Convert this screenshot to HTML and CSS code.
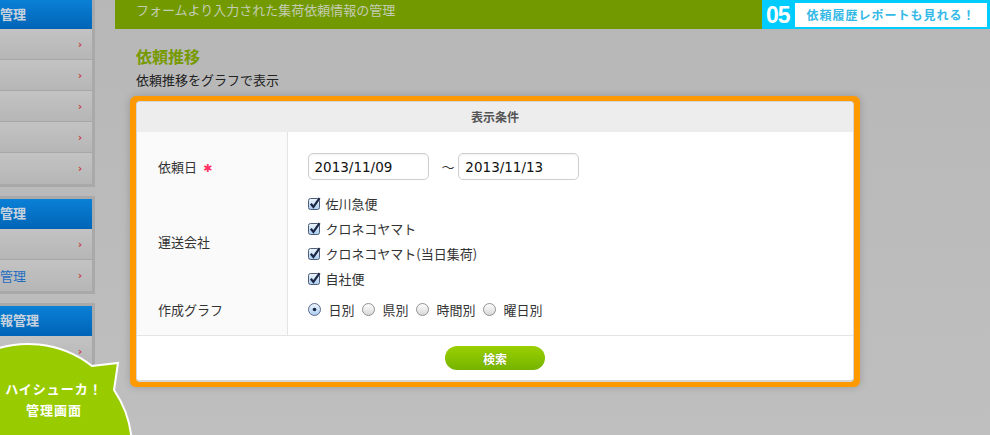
FILE: index.html
```html
<!DOCTYPE html>
<html lang="ja">
<head>
    <meta charset="UTF-8">
    <title>依頼推移 - ハイシューカ！管理画面</title>
    <link rel="stylesheet" href="styles.css">
</head>
<body>
    <svg class="svg-defs" width="0" height="0" aria-hidden="true">
        <defs>
            <linearGradient id="cbFill" x1="0" y1="0" x2="0" y2="1">
                <stop offset="0" stop-color="#eef6fd"/>
                <stop offset="1" stop-color="#a9cdef"/>
            </linearGradient>
            <linearGradient id="rdFill" x1="0" y1="0" x2="0" y2="1">
                <stop offset="0" stop-color="#ffffff"/>
                <stop offset="1" stop-color="#d6d6d6"/>
            </linearGradient>
        </defs>
    </svg>

    <div class="page">
        <aside class="sidebar">
            <div class="side-group first">
                <div class="side-head">管理</div>
                <ul class="side-list">
                    <li><a href="#"></a></li>
                    <li><a href="#"></a></li>
                    <li><a href="#"></a></li>
                    <li><a href="#"></a></li>
                    <li><a href="#"></a></li>
                </ul>
            </div>
            <div class="side-group">
                <div class="side-head">管理</div>
                <ul class="side-list">
                    <li><a href="#"></a></li>
                    <li><a href="#">管理</a></li>
                </ul>
            </div>
            <div class="side-group">
                <div class="side-head">報管理</div>
                <ul class="side-list">
                    <li><a href="#"></a></li>
                    <li><a href="#"></a></li>
                </ul>
            </div>
        </aside>

        <main class="main">
            <div class="topbar">
                <div class="topbar-text">フォームより入力された集荷依頼情報の管理</div>
                <div class="point">
                    <span class="point-no">05</span>
                    <span class="point-msg">依頼履歴レポートも見れる！</span>
                </div>
            </div>

            <div class="content">
                <h2 class="page-title">依頼推移</h2>
                <p class="lead">依頼推移をグラフで表示</p>

                <div class="highlight">
                    <div class="panel">
                        <div class="panel-head">表示条件</div>
                        <table class="cond">
                            <tr class="row-date">
                                <th>依頼日<span class="req">✱</span></th>
                                <td>
                                    <input type="text" class="date" value="2013/11/09">
                                    <span class="tilde">～</span>
                                    <input type="text" class="date" value="2013/11/13">
                                </td>
                            </tr>
                            <tr class="row-company">
                                <th>運送会社</th>
                                <td>
                                    <label class="check"><svg width="14" height="14" viewBox="0 0 14 14"><rect x="0.5" y="1.5" width="11" height="11" rx="2" fill="url(#cbFill)" stroke="#4f5d78"/><path d="M2.8 6.8 L5.4 10 L11.6 1.2" fill="none" stroke="#1b2744" stroke-width="2.2"/></svg>佐川急便</label>
                                    <label class="check"><svg width="14" height="14" viewBox="0 0 14 14"><rect x="0.5" y="1.5" width="11" height="11" rx="2" fill="url(#cbFill)" stroke="#4f5d78"/><path d="M2.8 6.8 L5.4 10 L11.6 1.2" fill="none" stroke="#1b2744" stroke-width="2.2"/></svg>クロネコヤマト</label>
                                    <label class="check"><svg width="14" height="14" viewBox="0 0 14 14"><rect x="0.5" y="1.5" width="11" height="11" rx="2" fill="url(#cbFill)" stroke="#4f5d78"/><path d="M2.8 6.8 L5.4 10 L11.6 1.2" fill="none" stroke="#1b2744" stroke-width="2.2"/></svg>クロネコヤマト(当日集荷)</label>
                                    <label class="check"><svg width="14" height="14" viewBox="0 0 14 14"><rect x="0.5" y="1.5" width="11" height="11" rx="2" fill="url(#cbFill)" stroke="#4f5d78"/><path d="M2.8 6.8 L5.4 10 L11.6 1.2" fill="none" stroke="#1b2744" stroke-width="2.2"/></svg>自社便</label>
                                </td>
                            </tr>
                            <tr class="row-graph">
                                <th>作成グラフ</th>
                                <td>
                                    <div class="radios">
                                        <label class="radio"><svg width="13" height="13" viewBox="0 0 13 13"><circle cx="6.5" cy="6.5" r="6" fill="url(#cbFill)" stroke="#5d6c88"/><circle cx="6.5" cy="6.5" r="1.8" fill="#1b2744"/></svg>日別</label>
                                        <label class="radio"><svg width="13" height="13" viewBox="0 0 13 13"><circle cx="6.5" cy="6.5" r="6" fill="url(#rdFill)" stroke="#929292"/></svg>県別</label>
                                        <label class="radio"><svg width="13" height="13" viewBox="0 0 13 13"><circle cx="6.5" cy="6.5" r="6" fill="url(#rdFill)" stroke="#929292"/></svg>時間別</label>
                                        <label class="radio"><svg width="13" height="13" viewBox="0 0 13 13"><circle cx="6.5" cy="6.5" r="6" fill="url(#rdFill)" stroke="#929292"/></svg>曜日別</label>
                                    </div>
                                </td>
                            </tr>
                        </table>
                        <div class="panel-foot">
                            <button type="button" class="btn-search">検索</button>
                        </div>
                    </div>
                </div>
            </div>
        </main>

        <div class="bubble">
            <svg class="bubble-shape" width="140" height="95" viewBox="0 0 140 95">
                <path d="M-76 108 A104 104 0 0 1 92 26 L118 23 L114 50 A104 104 0 0 1 132 108 L132 120 L-80 120 Z" fill="#99cc00" stroke="#ffffff" stroke-width="2"/>
            </svg>
            <div class="bubble-text">ハイシューカ！<br>管理画面</div>
        </div>
    </div>
</body>
</html>
```

FILE: styles.css
```css
* {
    margin: 0;
    padding: 0;
    box-sizing: border-box;
}

body {
    width: 990px;
    height: 435px;
    overflow: hidden;
    background: linear-gradient(to bottom, #b7b7b7, #bfbfbf);
    font-family: "Noto Sans CJK JP", sans-serif;
    font-size: 13px;
    color: #333;
}

.svg-defs {
    position: absolute;
}

.page {
    position: relative;
    display: flex;
    height: 435px;
}

/* sidebar */
.sidebar {
    width: 95px;
    flex-shrink: 0;
    margin-top: -3px;
}

.side-group {
    border: 3px solid #a9a9a9;
    border-left: none;
    margin-bottom: 9px;
}

.side-head {
    height: 30px;
    line-height: 28px;
    background: linear-gradient(to bottom, #0a80d6, #0064b6);
    color: #c9d3de;
    font-size: 13px;
    font-weight: bold;
}

.side-group.first .side-head {
    height: 29px;
}

.side-list {
    list-style: none;
}

.side-list li {
    height: 31px;
    border-bottom: 1px solid #a7a7a7;
    background: linear-gradient(to bottom, #c3c3c3, #b6b6b6);
}

.side-list li:last-child {
    border-bottom: none;
}

.side-list a {
    display: flex;
    align-items: center;
    height: 100%;
    padding-right: 10px;
    color: #1f6ec2;
    text-decoration: none;
    font-size: 13px;
}

.side-list a::after {
    content: "›";
    margin-left: auto;
    color: #c83a3a;
    font-size: 10px;
    font-weight: bold;
    font-family: "DejaVu Sans", sans-serif;
}

/* main */
.main {
    flex: 1;
    margin-left: 20px;
}

.topbar {
    display: flex;
    height: 29px;
}

.topbar-text {
    flex: 1;
    background: #729a00;
    color: #c4ccb4;
    font-size: 13px;
    line-height: 18px;
    padding: 1px 0 0 21px;
}

.point {
    width: 228px;
    background: #00ccff;
    display: flex;
    align-items: center;
    padding: 3px 3px 2px 4px;
}

.point-no {
    width: 29px;
    color: #fff;
    font-family: "Liberation Sans Narrow", "Liberation Sans", sans-serif;
    font-weight: bold;
    font-size: 23px;
    line-height: 24px;
    letter-spacing: -1px;
}

.point-msg {
    flex: 1;
    height: 24px;
    background: #fff;
    color: #34b9e6;
    font-weight: bold;
    font-size: 12px;
    letter-spacing: 1px;
    line-height: 24px;
    text-align: center;
}

.content {
    padding-left: 21px;
}

.page-title {
    margin-top: 16px;
    font-size: 16px;
    line-height: 22px;
    color: #769a00;
}

.lead {
    margin-top: 4px;
    font-size: 13px;
    line-height: 18px;
    color: #222;
}

.highlight {
    width: 730px;
    margin: 7px 0 0 -6px;
    padding: 5px 6px;
    background: #ff9900;
    border-radius: 6px;
    box-shadow: 0 0 8px rgba(0, 0, 0, 0.18);
}

.panel {
    background: #fff;
    border: 1px solid #d6d6d6;
    border-bottom-width: 2px;
    border-radius: 4px;
    overflow: hidden;
}

.panel-head {
    height: 30px;
    line-height: 30px;
    background: #ededed;
    text-align: center;
    font-size: 12px;
    font-weight: bold;
    color: #555;
}

.cond {
    width: 100%;
    border-collapse: collapse;
    border-bottom: 1px solid #e4e4e4;
}

.cond th {
    width: 150px;
    background: #fafafa;
    border-right: 1px solid #e4e4e4;
    text-align: left;
    font-weight: normal;
    padding-left: 21px;
    vertical-align: middle;
    color: #333;
}

.cond td {
    padding-left: 20px;
    vertical-align: middle;
}

.row-date th,
.row-date td {
    padding-top: 21px;
    padding-bottom: 11px;
}

.row-graph th,
.row-graph td {
    padding-top: 6px;
    padding-bottom: 13px;
}

.req {
    color: #ff3366;
    font-family: "DejaVu Sans", sans-serif;
    font-size: 11px;
    margin-left: 6px;
}

.date {
    width: 121px;
    height: 27px;
    border: 1px solid #cfcfcf;
    border-radius: 5px;
    box-shadow: inset 0 1px 2px rgba(0, 0, 0, 0.06);
    padding-left: 6px;
    font-family: "DejaVu Sans", sans-serif;
    font-size: 13.5px;
    color: #111;
    vertical-align: middle;
}

.tilde {
    display: inline-block;
    margin: 0 1px 0 10px;
    font-size: 13px;
    vertical-align: middle;
}

.check {
    display: flex;
    align-items: center;
    gap: 4px;
    height: 25px;
}

.radios {
    display: flex;
    align-items: center;
    height: 25px;
}

.radio {
    display: flex;
    align-items: center;
    gap: 8px;
    margin-right: 7px;
}

.panel-foot {
    padding: 10px 0;
    text-align: center;
}

.btn-search {
    width: 100px;
    height: 24px;
    border: none;
    border-radius: 12px;
    background: linear-gradient(to bottom, #9bd000, #74b300);
    color: #fff;
    font-family: "Noto Sans CJK JP", sans-serif;
    font-size: 12px;
    font-weight: bold;
    text-shadow: 0 0 1px rgba(0, 0, 0, 0.3);
    cursor: pointer;
}

/* bubble over the sidebar */
.bubble {
    position: absolute;
    left: 0;
    top: 340px;
    width: 140px;
    height: 95px;
}

.bubble-shape {
    position: absolute;
    left: 0;
    top: 0;
}

.bubble-text {
    position: relative;
    width: 108px;
    padding-top: 38px;
    text-align: center;
    color: #fff;
    font-size: 13px;
    font-weight: bold;
    line-height: 21px;
    letter-spacing: 1px;
}
```
